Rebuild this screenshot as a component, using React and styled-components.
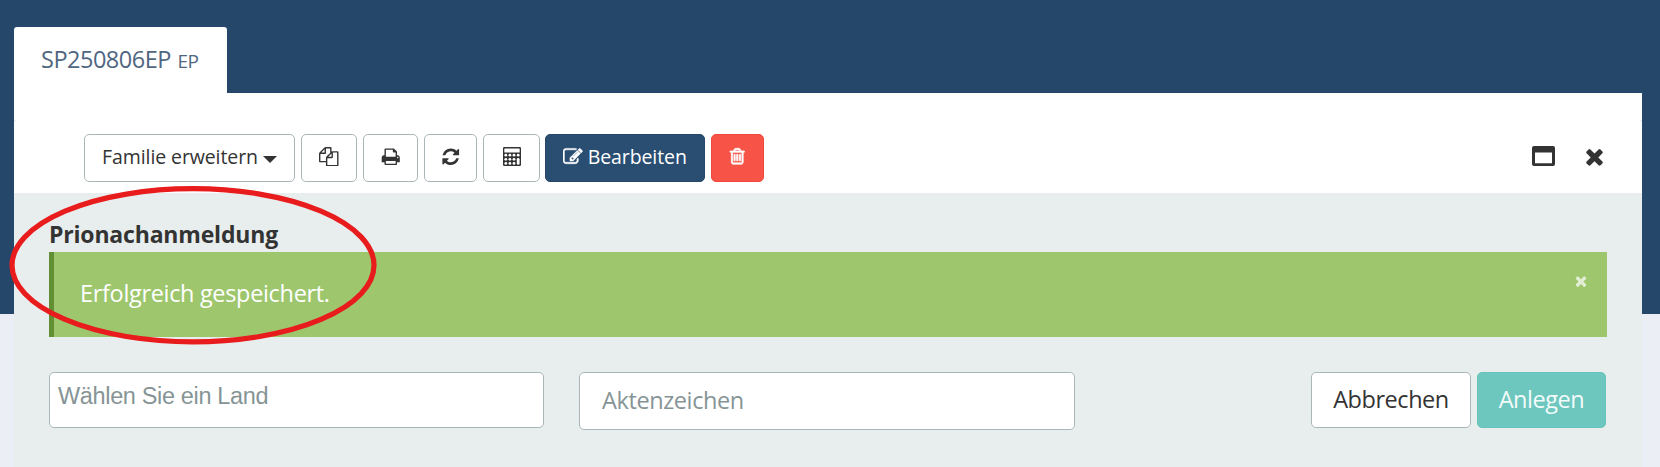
import React from "react";
import styled, { createGlobalStyle } from "styled-components";

const GlobalStyle = createGlobalStyle`
  * {
    box-sizing: border-box;
  }
  body {
    margin: 0;
    background: #ebeef4;
    font-family: "Open Sans", "Noto Sans", sans-serif;
    font-size: 23.5px;
    letter-spacing: -0.5px;
    color: #333;
  }
  button, input {
    font-family: inherit;
    margin: 0;
  }
`;

const Page = styled.div`
  height: 467px;
  padding: 27px 18px 0 14px;
  overflow: hidden;
  position: relative;
  background: linear-gradient(#25476a 314px, #ebeef4 314px);
`;

const Tab = styled.div`
  width: 213px;
  height: 66px;
  padding: 16px 0 0 27px;
  line-height: 33px;
  white-space: nowrap;
  background: #fff;
  color: #506681;
  border-radius: 3px 3px 0 0;
  small {
    margin-left: 1px;
    font-size: 19px;
  }
`;

const Panel = styled.div`
  height: 374px;
  padding-top: 27px;
  background: #fff;
`;

const Card = styled.div`
  height: 347px;
  background: #e8eeed;
`;

const Toolbar = styled.div`
  display: flex;
  align-items: flex-start;
  height: 73px;
  padding: 14px 35px 0 70px;
  background: #fff;
  border-radius: 4px 4px 0 0;
`;

const Tools = styled.div`
  display: flex;
  flex: 1;
`;

const Tool = styled.button`
  display: flex;
  align-items: center;
  justify-content: center;
  gap: 5px;
  width: ${(p) => p.$width}px;
  height: 48px;
  margin-right: ${(p) => p.$gap || 6}px;
  padding: 0 0 3px;
  font-size: 19.5px;
  letter-spacing: -0.1px;
  white-space: nowrap;
  color: ${(p) => (p.$fill ? "#fff" : "#333")};
  background: ${(p) => p.$fill || "#fff"};
  border: 1px solid ${(p) => p.$line || "#a9b7b9"};
  border-radius: 5px;
`;

const Caret = styled.span`
  margin-top: 5px;
  border: 7px solid transparent;
  border-top-color: #333;
  border-bottom: 0;
`;

const WindowTools = styled.div`
  display: flex;
  align-items: center;
  gap: 27px;
  height: 44px;
`;

const Body = styled.div`
  padding: 25px 35px 0;
`;

const Title = styled.div`
  height: 34px;
  line-height: 33px;
  font-size: 23px;
  font-weight: 700;
  letter-spacing: -0.18px;
`;

const Alert = styled.div`
  display: flex;
  justify-content: space-between;
  height: 85px;
  padding: 25px 18px 0 26px;
  line-height: 33px;
  color: #fff;
  background: #9dc66d;
  border-left: 5px solid #628f34;
  letter-spacing: -0.33px;
`;

const Form = styled.div`
  display: flex;
  align-items: flex-start;
  margin-top: 35px;
`;

const Field = styled.div`
  height: ${(p) => (p.$select ? 56 : 58)}px;
  width: ${(p) => (p.$select ? 495 : 496)}px;
  margin-right: 35px;
  padding: ${(p) => (p.$select ? "9px 8px" : "11px 22px")};
  line-height: ${(p) => (p.$select ? 28 : 33)}px;
  font-family: ${(p) => (p.$select ? '"Liberation Sans", Arial, sans-serif' : "inherit")};
  letter-spacing: ${(p) => (p.$select ? -0.35 : -0.4)}px;
  color: #869496;
  background: #fff;
  border: 1px solid #a9b7b9;
  border-radius: 5px;
`;

const Actions = styled.div`
  display: flex;
  gap: 6px;
  margin: 0 1px 0 auto;
`;

const Action = styled.button`
  width: ${(p) => p.$width}px;
  height: 56px;
  padding: 0 0 2px;
  font-size: 23.5px;
  letter-spacing: -0.45px;
  color: ${(p) => (p.$primary ? "#f3fbfa" : "#333")};
  background: ${(p) => (p.$primary ? "#6dc7be" : "#fff")};
  border: 1px solid ${(p) => (p.$primary ? "#67c2b8" : "#a9b7b9")};
  border-radius: 5px;
`;

const Marker = styled.svg`
  position: absolute;
  left: 8px;
  top: 184px;
  pointer-events: none;
`;

const paths = {
  copy: "M1696 384q40 0 68 28t28 68v1216q0 40-28 68t-68 28h-960q-40 0-68-28t-28-68v-288h-544q-40 0-68-28t-28-68v-672q0-40 20-88t48-76l408-408q28-28 76-48t88-20h416q40 0 68 28t28 68v328q68-40 128-40h416zm-544 213l-299 299h299v-299zm-640-384l-299 299h299v-299zm196 647l316-316v-416h-384v416q0 40-28 68t-68 28h-416v640h512v-256q0-40 20-88t48-76zm956 804v-1152h-384v416q0 40-28 68t-68 28h-416v640h896z",
  print: "M448 1536h896v-256h-896v256zm0-640h896v-384h-160q-40 0-68-28t-28-68v-160h-640v640zm1152 64q0-26-19-45t-45-19-45 19-19 45 19 45 45 19 45-19 19-45zm128 0v416q0 13-9.5 22.5t-22.5 9.5h-224v160q0 40-28 68t-68 28h-960q-40 0-68-28t-28-68v-160h-224q-13 0-22.5-9.5t-9.5-22.5v-416q0-79 56.5-135.5t135.5-56.5h64v-544q0-40 28-68t68-28h672q40 0 88 20t76 48l152 152q28 28 48 76t20 88v256h64q79 0 135.5 56.5t56.5 135.5z",
  refresh: "M1639 1056q0 5-1 7-64 268-268 434.5t-478 166.5q-146 0-282.5-55t-243.5-157l-129 129q-19 19-45 19t-45-19-19-45v-448q0-26 19-45t45-19h448q26 0 45 19t19 45-19 45l-137 137q71 66 161 102t187 36q134 0 250-65t186-179q11-17 53-117 8-23 30-23h192q13 0 22.5 9.5t9.5 22.5zm25-800v448q0 26-19 45t-45 19h-448q-26 0-45-19t-19-45 19-45l138-138q-148-137-349-137-134 0-250 65t-186 179q-11 17-53 117-8 23-30 23h-199q-13 0-22.5-9.5t-9.5-22.5v-7q65-268 270-434.5t480-166.5q146 0 284 55.5t245 156.5l130-129q19-19 45-19t45 19 19 45z",
  edit: "M888 1184l116-116-152-152-116 116v56h96v96h56zm440-720q-16-16-33 1l-350 350q-17 17-1 33t33-1l350-350q17-17 1-33zm80 594v190q0 119-84.5 203.5t-203.5 84.5h-832q-119 0-203.5-84.5t-84.5-203.5v-832q0-119 84.5-203.5t203.5-84.5h832q63 0 117 25 15 7 18 23 3 17-9 29l-49 49q-14 14-32 8-23-6-45-6h-832q-66 0-113 47t-47 113v832q0 66 47 113t113 47h832q66 0 113-47t47-113v-126q0-13 9-22l64-64q15-15 35-7t20 29zm-96-738l288 288-672 672h-288v-288zm444 132l-92 92-288-288 92-92q28-28 68-28t68 28l152 152q28 28 28 68t-28 68z",
  trash: "M704 736v576q0 14-9 23t-23 9h-64q-14 0-23-9t-9-23v-576q0-14 9-23t23-9h64q14 0 23 9t9 23zm256 0v576q0 14-9 23t-23 9h-64q-14 0-23-9t-9-23v-576q0-14 9-23t23-9h64q14 0 23 9t9 23zm256 0v576q0 14-9 23t-23 9h-64q-14 0-23-9t-9-23v-576q0-14 9-23t23-9h64q14 0 23 9t9 23zm128 724v-948h-896v948q0 22 7 40.5t14.5 27 10.5 8.5h832q3 0 10.5-8.5t14.5-27 7-40.5zm-672-1076h448l-48-117q-7-9-17-11h-317q-10 2-17 11zm928 32v64q0 14-9 23t-23 9h-96v948q0 83-47 143.5t-113 60.5h-832q-66 0-113-58.5t-47-141.5v-952h-96q-14 0-23-9t-9-23v-64q0-14 9-23t23-9h309l70-167q15-37 54-63t79-26h320q40 0 79 26t54 63l70 167h309q14 0 23 9t9 23z",
  close: "M1490 1322q0 40-28 68l-136 136q-28 28-68 28t-68-28l-294-294-294 294q-28 28-68 28t-68-28l-136-136q-28-28-28-68t28-68l294-294-294-294q-28-28-28-68t28-68l136-136q28-28 68-28t68 28l294 294 294-294q28-28 68-28t68 28l136 136q28 28 28 68t-28 68l-294 294 294 294q28 28 28 68z",
};

const Icon = ({ name, size = 19.5, bold = 0 }) => (
  <svg width={size} height={size} viewBox="0 0 1792 1792" fill="currentColor" stroke="currentColor" strokeWidth={bold}>
    <path d={paths[name]} />
  </svg>
);

const Calculator = () => (
  <svg width="18" height="19" viewBox="0 0 18 19">
    <rect width="18" height="19" rx="1.2" fill="#333" />
    <rect x="1.3" y="1.4" width="15.4" height="4" rx="0.5" fill="#fff" />
    {[8.2, 12.3, 16.4].map((y) =>
      [2.8, 6.9, 11].map((x) => <circle key={`${x}-${y}`} cx={x} cy={y} r="1.4" fill="#fff" />)
    )}
    <circle cx="15.2" cy="8.2" r="1.4" fill="#fff" />
    <rect x="13.8" y="10.9" width="2.8" height="6.9" rx="1.4" fill="#fff" />
  </svg>
);

const Maximize = () => (
  <svg width="23" height="20" viewBox="0 0 23 20">
    <path fill="#333" fillRule="evenodd" d="M2 0h19a2 2 0 0 1 2 2v16a2 2 0 0 1-2 2H2a2 2 0 0 1-2-2V2a2 2 0 0 1 2-2zM3 6.5v10.7h17V6.5z" />
  </svg>
);

const Dismiss = styled.span`
  display: flex;
  height: 14px;
  margin-top: -3px;
  align-items: center;
  opacity: 0.7;
`;

const App = () => {
  return (
    <Page>
      <GlobalStyle />
      <Tab>
        SP250806EP <small>EP</small>
      </Tab>
      <Panel>
        <Card>
          <Toolbar>
            <Tools>
              <Tool $width={211}>
                Familie erweitern
                <Caret />
              </Tool>
              <Tool $width={56}><Icon name="copy" /></Tool>
              <Tool $width={55}><Icon name="print" /></Tool>
              <Tool $width={53}><Icon name="refresh" /></Tool>
              <Tool $width={57} $gap={5}><Calculator /></Tool>
              <Tool $width={160} $fill="#2a4e72" $line="#25476a">
                <Icon name="edit" bold={50} />
                Bearbeiten
              </Tool>
              <Tool $width={53} $fill="#f75346" $line="#f0483c"><Icon name="trash" size={18.5} bold={70} /></Tool>
            </Tools>
            <WindowTools>
              <Maximize />
              <Icon name="close" size={25} />
            </WindowTools>
          </Toolbar>
          <Body>
            <Title>Prionachanmeldung</Title>
            <Alert>
              Erfolgreich gespeichert.
              <Dismiss><Icon name="close" size={16} /></Dismiss>
            </Alert>
            <Form>
              <Field $select>Wählen Sie ein Land</Field>
              <Field>Aktenzeichen</Field>
              <Actions>
                <Action $width={160}>Abbrechen</Action>
                <Action $width={129} $primary>Anlegen</Action>
              </Actions>
            </Form>
          </Body>
        </Card>
      </Panel>
      <Marker width="372" height="164" viewBox="0 0 372 164">
        <ellipse cx="185" cy="81.3" rx="181" ry="76.6" fill="none" stroke="#e81c1c" strokeWidth="5.2" />
      </Marker>
    </Page>
  );
};

export default App;
